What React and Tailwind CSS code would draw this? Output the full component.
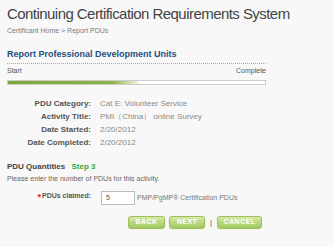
import React from "react";

function Btn({ children, w }) {
  return (
    <div
      className={`h-[13px] ${w} rounded-[3px] border border-[#9cbf5a] bg-gradient-to-b from-[#d8ebab] via-[#b9d87d] to-[#a2c862] text-white text-[7px] font-bold flex items-center justify-center tracking-[0.5px] shadow-[0_0_1px_#c8dca0]`}
    >
      {children}
    </div>
  );
}

export default function App() {
  return (
    <div className="w-[334px] h-[247px] bg-[#f8f8f8] text-[#666] overflow-hidden" style={{ fontFamily: '"Liberation Sans", Arial, sans-serif' }}>
      <div className="pl-[7px] pt-[4px]">
        <div className="text-[15px] leading-[20px] tracking-[-0.55px] whitespace-nowrap text-[#444]">Continuing Certification Requirements System</div>
        <div className="mt-[2px] text-[7px] leading-[10px] text-[#7a7a7a]">Certificant Home &gt; Report PDUs</div>
        <div className="mt-[12px] w-[259px] text-[9px] leading-[13px] font-bold text-[#1f4f80] pb-[2px] border-b border-dotted border-[#aaa]">
          Report Professional Development Units
        </div>
        <div className="w-[259px] flex justify-between text-[7px] leading-[10px] text-[#555] mt-[2px]">
          <span>Start</span>
          <span>Complete</span>
        </div>
        <div className="w-[259px] h-[5px] mt-[4px] border border-[#ccc] bg-white flex">
          <div className="w-[130px] h-full bg-gradient-to-r from-[#7ea83a] via-[#8ab443] via-80% to-[#eef5d6]" />
        </div>
        <div className="mt-[14px] grid grid-cols-[84px_1fr] gap-x-[9px] gap-y-[3px] text-[8px] leading-[10px]">
          <div className="text-right font-bold text-[#555]">PDU Category:</div>
          <div className="text-[#888]">Cat E: Volunteer Service</div>
          <div className="text-right font-bold text-[#555]">Activity Title:</div>
          <div className="text-[#888]">PMI（China） online Survey</div>
          <div className="text-right font-bold text-[#555]">Date Started:</div>
          <div className="text-[#888]">2/20/2012</div>
          <div className="text-right font-bold text-[#555]">Date Completed:</div>
          <div className="text-[#888]">2/20/2012</div>
        </div>
        <div className="mt-[14px] text-[8px] leading-[10px] font-bold text-[#444]">
          PDU Quantities <span className="ml-[4px] text-[#3aa53a]">Step 3</span>
        </div>
        <div className="mt-[2px] text-[7px] leading-[10px] text-[#666]">Please enter the number of PDUs for this activity.</div>
        <div className="mt-[7px] flex items-center text-[7px]">
          <div className="w-[84px] text-right font-bold text-[#555]">
            <span className="text-[#d22] text-[9px] align-top mr-[1px]">*</span>PDUs claimed:
          </div>
          <div className="w-[34px] h-[14px] ml-[10px] border border-[#bbb] bg-white text-[7px] text-[#555] pl-[4px] flex items-center">5</div>
          <div className="ml-[2px] text-[#777]">PMP/PgMP® Certification PDUs</div>
        </div>
        <div className="mt-[11px] flex items-center pl-[121px]">
          <Btn w="w-[37px]">BACK</Btn>
          <div className="ml-[4px]"><Btn w="w-[36px]">NEXT</Btn></div>
          <span className="mx-[5px] text-[8px] text-[#555]">|</span>
          <Btn w="w-[45px]">CANCEL</Btn>
        </div>
      </div>
    </div>
  );
}
